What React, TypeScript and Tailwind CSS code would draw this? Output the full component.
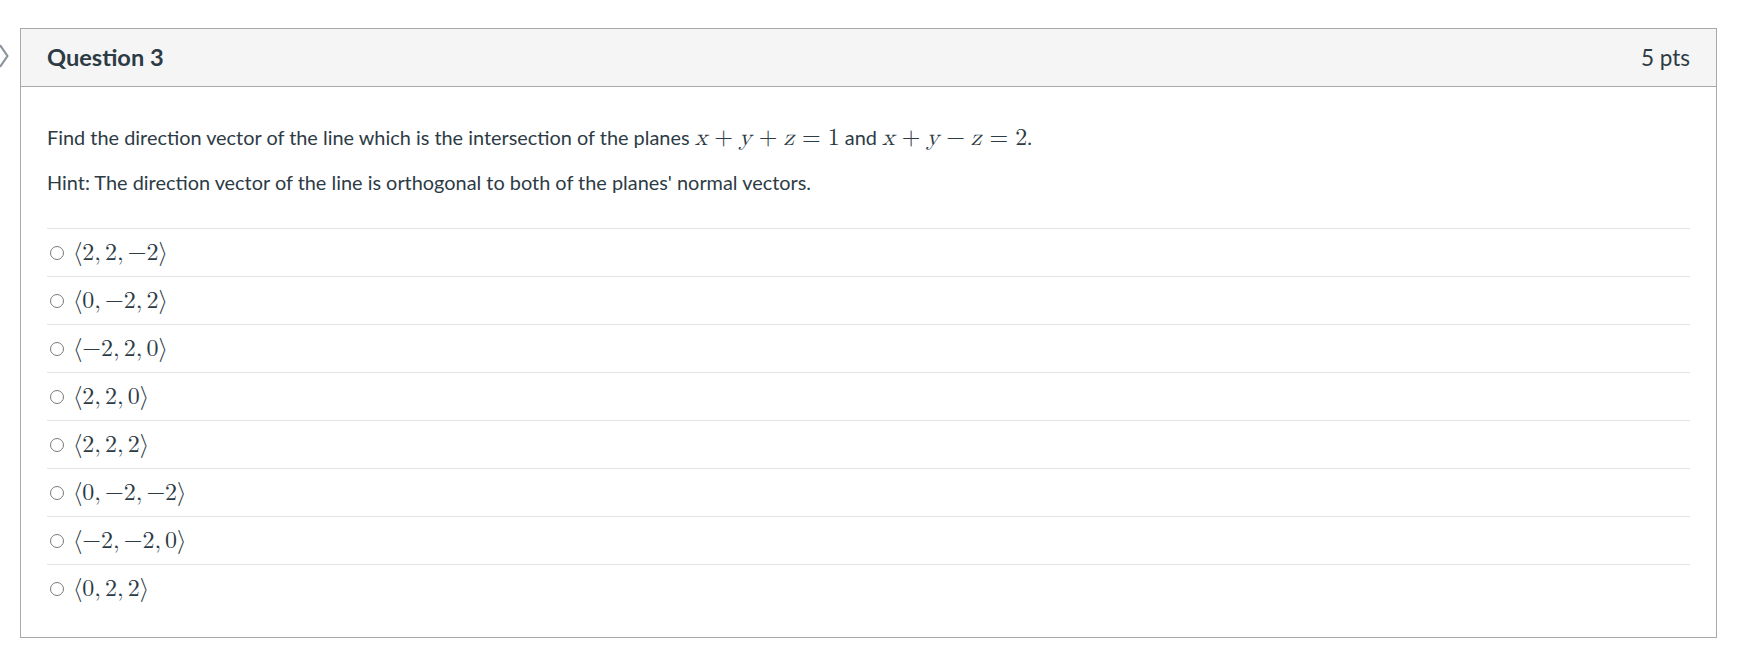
import React from 'react';

const options: string[][] = [
  ['2', '2', '−2'],
  ['0', '−2', '2'],
  ['−2', '2', '0'],
  ['2', '2', '0'],
  ['2', '2', '2'],
  ['0', '−2', '−2'],
  ['−2', '−2', '0'],
  ['0', '2', '2'],
];

const mathFont = "font-['Latin_Modern_Math','Liberation_Serif',serif]";

function Vec({ parts }: { parts: string[] }) {
  return (
    <span className={`${mathFont} text-[24px] leading-none`}>
      <span>⟨</span>
      {parts.map((p, i) => (
        <span key={i}>
          {p}
          {i < parts.length - 1 && <span className="mr-[4px]">,</span>}
        </span>
      ))}
      <span>⟩</span>
    </span>
  );
}

function Eq({ sign, rhs }: { sign: string; rhs: string }) {
  return (
    <span className={`${mathFont} text-[24px] leading-none`}>
      <i>x</i>
      <span className="ml-[7px] mr-[6px]">+</span>
      <i>y</i>
      <span className="ml-[7px] mr-[6px]">{sign}</span>
      <i>z</i>
      <span className="ml-[8px] mr-[7px]">=</span>
      {rhs}
    </span>
  );
}

export default function App() {
  return (
    <div className="w-[1760px] h-[662px] bg-white font-['Lato',sans-serif] text-[#2d3b45]">
      <div className="flex pt-[28px]">
        <div className="w-[20px] shrink-0 pt-[16px]">
          <svg width="12" height="24" viewBox="0 0 12 24" className="-ml-[1px]">
            <path d="M1 1 L8.5 12 L1 23" fill="none" stroke="#8a949c" strokeWidth="2.2" strokeLinejoin="round" />
          </svg>
        </div>
        <div className="w-[1697px] border border-[#a8a8a8]">
          <div className="flex h-[58px] items-center justify-between border-b border-[#a8a8a8] bg-[#f5f5f5] px-[26px]">
            <h2 className="text-[23.6px] font-bold">Question 3</h2>
            <span className="text-[22.5px]">5 pts</span>
          </div>
          <div className="px-[26px] pb-[25px] pt-[35px] text-[19.9px]">
            <p className="leading-[30px]">
              Find the direction vector of the line which is the intersection of the planes{' '}
              <Eq sign="+" rhs="1" /> and <Eq sign="−" rhs="2" />.
            </p>
            <p className="mt-[15px] leading-[30px]">
              Hint: The direction vector of the line is orthogonal to both of the planes' normal vectors.
            </p>
            <div className="mt-[31px]">
              {options.map((o, i) => (
                <label
                  key={i}
                  className="flex h-[48px] items-center border-t border-[#e2e2e2] pl-[3px]"
                >
                  <span className="h-[14px] w-[14px] shrink-0 rounded-full border border-[#7a7a7a]" />
                  <span className="ml-[9px]">
                    <Vec parts={o} />
                  </span>
                </label>
              ))}
            </div>
          </div>
        </div>
      </div>
    </div>
  );
}
